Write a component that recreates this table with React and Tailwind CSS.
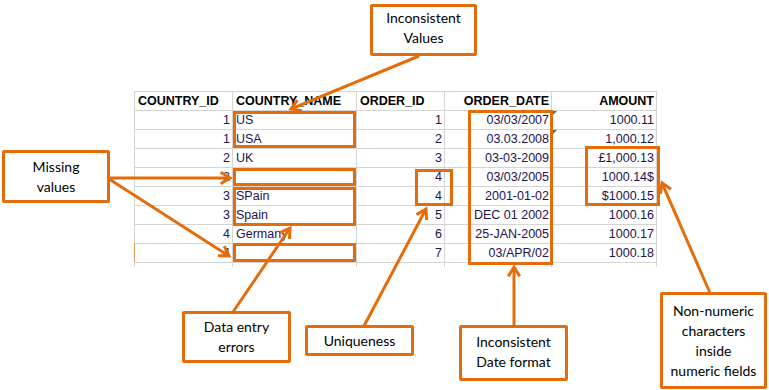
import React from 'react';

const ORANGE = '#e46c0a';

const rows = [
  ['1', 'US', '1', '03/03/2007', '1000.11'],
  ['1', 'USA', '2', '03.03.2008', '1,000.12'],
  ['2', 'UK', '3', '03-03-2009', '£1,000.13'],
  ['2', '', '4', '03/03/2005', '1000.14$'],
  ['3', 'SPain', '4', '2001-01-02', '$1000.15'],
  ['3', 'Spain', '5', 'DEC 01 2002', '1000.16'],
  ['4', 'Germany', '6', '25-JAN-2005', '1000.17'],
  ['4', '', '7', '03/APR/02', '1000.18'],
];

const cellBase = 'h-[19px] flex items-center border-r border-b border-[#d4d4d4] overflow-visible whitespace-nowrap';

const SheetRow = ({ cells, header }) => {
  const tone = header ? 'font-bold text-black' : 'text-[#24124f]';
  return (
    <>
      <div className={`${cellBase} ${tone} ${header ? 'justify-start pl-[3px]' : 'justify-end pr-[2px]'}`}>{cells[0]}</div>
      <div className={`${cellBase} ${tone} justify-start pl-[3px]`}>{cells[1]}</div>
      <div className={`${cellBase} ${tone} ${header ? 'justify-start pl-[3px]' : 'justify-end pr-[2px]'}`}>{cells[2]}</div>
      <div className={`${cellBase} ${tone} justify-end pr-[2px]`}>{cells[3]}</div>
      <div className={`${cellBase} ${tone} justify-end pr-[2px]`}>{cells[4]}</div>
    </>
  );
};

// open "V" arrow, tip at (x2, y2)
const Arrow = ({ x1, y1, x2, y2 }) => {
  const a = Math.atan2(y2 - y1, x2 - x1);
  const len = 11;
  const spread = 0.55;
  const w1 = [x2 - len * Math.cos(a - spread), y2 - len * Math.sin(a - spread)];
  const w2 = [x2 - len * Math.cos(a + spread), y2 - len * Math.sin(a + spread)];
  return (
    <g>
      <line x1={x1} y1={y1} x2={x2 - 1.5 * Math.cos(a)} y2={y2 - 1.5 * Math.sin(a)} />
      <polyline points={`${w1[0]},${w1[1]} ${x2},${y2} ${w2[0]},${w2[1]}`} fill="none" />
    </g>
  );
};

// highlight rectangle given its outer bounds
const Mark = ({ l, t, r, b }) => (
  <rect x={l + 1.5} y={t + 1.5} width={r - l - 3} height={b - t - 3} fill="none" />
);

const Note = ({ className, lines }) => (
  <div
    className={`absolute flex flex-col items-center justify-center bg-white border-[3px] border-[#e46c0a] rounded-[2px] text-[14px] leading-[20px] text-black ${className}`}
    style={{ fontFamily: 'Lato, "Open Sans", sans-serif' }}
  >
    {lines.map((l) => (
      <span key={l}>{l}</span>
    ))}
  </div>
);

export default function App() {
  return (
    <div className="relative w-[769px] h-[390px] bg-white overflow-hidden">
      {/* spreadsheet */}
      <div
        className="absolute left-[134px] top-[91px] grid grid-cols-[98px_124px_88px_107px_105px] border-l border-t border-[#d4d4d4] text-[12.5px]"
        style={{ fontFamily: '"Liberation Sans", Arial, sans-serif' }}
      >
        <SheetRow header cells={['COUNTRY_ID', 'COUNTRY_NAME', 'ORDER_ID', 'ORDER_DATE', 'AMOUNT']} />
        {rows.map((r, i) => (
          <SheetRow key={i} cells={r} />
        ))}
        <div className="h-[4px] border-r border-[#d4d4d4]" />
        <div className="h-[4px] border-r border-[#d4d4d4]" />
        <div className="h-[4px] border-r border-[#d4d4d4]" />
        <div className="h-[4px] border-r border-[#d4d4d4]" />
        <div className="h-[4px] border-r border-[#d4d4d4]" />
      </div>

      {/* marks and arrows */}
      <svg className="absolute inset-0 pointer-events-none" width="769" height="390">
        <line x1="134.5" y1="243" x2="134.5" y2="262" stroke="#e39a4a" strokeWidth="1" />
        <polygon points="552,111 557,111 552,116" fill="#2e8b2e" />
        <polygon points="552,130 557,130 552,135" fill="#2e8b2e" />
        <g stroke={ORANGE} strokeWidth="3" strokeLinejoin="miter">
          <Mark l={233} t={111} r={356} b={148} />
          <Mark l={233} t={168} r={356} b={186} />
          <Mark l={233} t={187} r={356} b={226} />
          <Mark l={233} t={243} r={356} b={262} />
          <Mark l={415} t={169} r={453} b={206} />
          <Mark l={468} t={110} r={553} b={265} />
          <Mark l={585} t={146} r={660} b={206} />

          <Arrow x1={419} y1={56} x2={291} y2={109} />
          <Arrow x1={109} y1={178} x2={230} y2={178} />
          <Arrow x1={109} y1={179} x2={229} y2={256} />
          <Arrow x1={233} y1={312} x2={290} y2={228} />
          <Arrow x1={364} y1={326} x2={426} y2={209} />
          <Arrow x1={514} y1={326} x2={514} y2={267} />
          <Arrow x1={710} y1={293} x2={662} y2={183} />
        </g>
      </svg>

      {/* annotations */}
      <Note className="left-[370px] top-[4px] w-[107px] h-[52px] pb-[4px]" lines={['Inconsistent', 'Values']} />
      <Note className="left-[2px] top-[150px] w-[108px] h-[53px]" lines={['Missing', 'values']} />
      <Note className="left-[182px] top-[311px] w-[109px] h-[52px]" lines={['Data entry', 'errors']} />
      <Note className="left-[305px] top-[325px] w-[109px] h-[31px]" lines={['Uniqueness']} />
      <Note className="left-[459px] top-[325px] w-[109px] h-[56px] pb-[3px]" lines={['Inconsistent', 'Date format']} />
      <Note
        className="left-[660px] top-[292px] w-[107px] h-[97px]"
        lines={['Non-numeric', 'characters', 'inside', 'numeric fields']}
      />
    </div>
  );
}
